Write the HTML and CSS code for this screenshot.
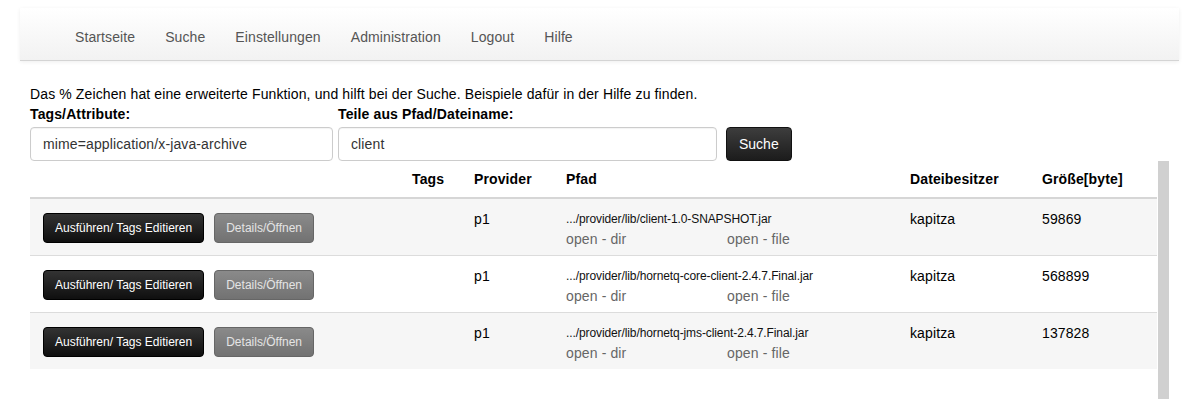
FILE: index.html
```html
<!DOCTYPE html>
<html lang="de">
<head>
<meta charset="utf-8">
<title>Suche</title>
<link rel="stylesheet" href="styles.css">
</head>
<body>
<div class="page">
  <div class="navbar">
    <ul class="nav">
      <li><a href="#">Startseite</a></li>
      <li><a href="#">Suche</a></li>
      <li><a href="#">Einstellungen</a></li>
      <li><a href="#">Administration</a></li>
      <li><a href="#">Logout</a></li>
      <li><a href="#">Hilfe</a></li>
    </ul>
  </div>
  <div class="content">
    <form class="search">
      <p class="info">Das % Zeichen hat eine erweiterte Funktion, und hilft bei der Suche. Beispiele dafür in der Hilfe zu finden.</p>
      <label class="lbl">Tags/Attribute:</label>
      <label class="lbl">Teile aus Pfad/Dateiname:</label>
      <span></span>
      <input class="field" type="text" value="mime=application/x-java-archive">
      <input class="field" type="text" value="client">
      <button class="btn btn-search" type="button">Suche</button>
    </form>
    <div class="scroller">
      <table class="results">
        <colgroup>
          <col class="c-act"><col class="c-tags"><col class="c-prov"><col class="c-path"><col class="c-own"><col class="c-size">
        </colgroup>
        <thead>
          <tr><th></th><th>Tags</th><th>Provider</th><th>Pfad</th><th>Dateibesitzer</th><th>Größe[byte]</th></tr>
        </thead>
        <tbody>
          <tr class="odd">
            <td class="act"><button class="btn btn-dark" type="button">Ausführen/ Tags Editieren</button><button class="btn btn-gray" type="button">Details/Öffnen</button></td>
            <td></td>
            <td>p1</td>
            <td><div class="path">.../provider/lib/client-1.0-SNAPSHOT.jar</div><div class="links"><a class="open dir" href="#">open - dir</a><a class="open" href="#">open - file</a></div></td>
            <td>kapitza</td>
            <td>59869</td>
          </tr>
          <tr>
            <td class="act"><button class="btn btn-dark" type="button">Ausführen/ Tags Editieren</button><button class="btn btn-gray" type="button">Details/Öffnen</button></td>
            <td></td>
            <td>p1</td>
            <td><div class="path">.../provider/lib/hornetq-core-client-2.4.7.Final.jar</div><div class="links"><a class="open dir" href="#">open - dir</a><a class="open" href="#">open - file</a></div></td>
            <td>kapitza</td>
            <td>568899</td>
          </tr>
          <tr class="odd">
            <td class="act"><button class="btn btn-dark" type="button">Ausführen/ Tags Editieren</button><button class="btn btn-gray" type="button">Details/Öffnen</button></td>
            <td></td>
            <td>p1</td>
            <td><div class="path">.../provider/lib/hornetq-jms-client-2.4.7.Final.jar</div><div class="links"><a class="open dir" href="#">open - dir</a><a class="open" href="#">open - file</a></div></td>
            <td>kapitza</td>
            <td>137828</td>
          </tr>
        </tbody>
      </table>
      <div class="bar"></div>
    </div>
  </div>
</div>
</body>
</html>
```
FILE: styles.css
```css
html, body {
  margin: 0;
  padding: 0;
  background: #fff;
}
body {
  font-family: "Liberation Sans", Arial, Helvetica, sans-serif;
  font-size: 14px;
  line-height: 20px;
  letter-spacing: 0.12px;
  color: #000;
  overflow: hidden;
}
.page {
  padding: 8px 21px 0 20px;
}
.navbar {
  box-sizing: border-box;
  height: 53px;
  padding-top: 5px;
  background: linear-gradient(to bottom, #ffffff, #f2f2f2);
  border-bottom: 1px solid #d4d4d4;
  box-shadow: 0 1px 4px rgba(0, 0, 0, 0.07);
  display: flex;
  align-items: center;
}
.nav {
  list-style: none;
  margin: 0;
  padding: 0 0 0 40px;
  display: flex;
}
.nav a {
  display: block;
  padding: 6px 15px;
  color: #555;
  text-decoration: none;
  font-size: 14px;
  letter-spacing: 0.1px;
}
.content {
  padding: 0 10px;
}
.search {
  margin: 23px 0 0 0;
  display: grid;
  grid-template-columns: 303px 379px auto;
  column-gap: 5px;
  align-items: start;
}
.info {
  grid-column: 1 / -1;
  margin: 0;
}
.lbl {
  font-weight: bold;
  margin-bottom: 3px;
}
.field {
  box-sizing: border-box;
  height: 34px;
  width: 100%;
  margin: 0;
  padding: 6px 12px;
  border: 1px solid #ccc;
  border-radius: 4px;
  font-family: inherit;
  font-size: 14px;
  letter-spacing: 0.12px;
  color: #333;
  background: #fff;
  box-shadow: inset 0 1px 1px rgba(0, 0, 0, 0.05);
}
.btn {
  font-family: inherit;
  letter-spacing: 0;
  cursor: pointer;
  border-radius: 4px;
  margin: 0;
}
.btn-search {
  justify-self: start;
  margin-left: 4px;
  height: 34px;
  padding: 0 12px;
  font-size: 14px;
  color: #fff;
  background: linear-gradient(to bottom, #3d3d3d, #1c1c1c);
  border: 1px solid #111;
}
.scroller {
  display: flex;
  align-items: flex-start;
  height: 238px;
}
.results {
  width: 1127px;
  border-collapse: collapse;
  table-layout: fixed;
}
.c-act { width: 374px; }
.c-tags { width: 62px; }
.c-prov { width: 92px; }
.c-path { width: 344px; }
.c-own { width: 132px; }
.c-size { width: 123px; }
.results th {
  text-align: left;
  font-weight: bold;
  padding: 8px 8px;
  border-bottom: 2px solid #d6d6d6;
}
.results td {
  vertical-align: top;
  padding: 10px 8px 6px 8px;
  border-top: 1px solid #dcdcdc;
}
.results tbody tr:first-child td {
  border-top: 0;
}
.results tr.odd td {
  background: #f6f6f6;
}
.act {
  padding-left: 13px !important;
}
.act .btn {
  font-size: 12px;
  line-height: 18px;
  padding: 5px 11px;
  margin-top: 4px;
  vertical-align: top;
}
.btn-dark {
  color: #fff;
  background: linear-gradient(to bottom, #333, #0f0f0f);
  border: 1px solid #000;
  margin-right: 10px;
}
.btn-gray {
  color: #e4e4e4;
  background: linear-gradient(to bottom, #8a8a8a, #727272);
  border: 1px solid #666;
}
.path {
  font-size: 12px;
  letter-spacing: -0.1px;
  color: #111;
  line-height: 20px;
}
.links {
  line-height: 20px;
}
.open {
  color: #666;
  text-decoration: none;
}
.open.dir {
  display: inline-block;
  width: 161px;
}
.bar {
  width: 11px;
  height: 238px;
  margin-left: 1px;
  background: #d0d0d0;
}
```
